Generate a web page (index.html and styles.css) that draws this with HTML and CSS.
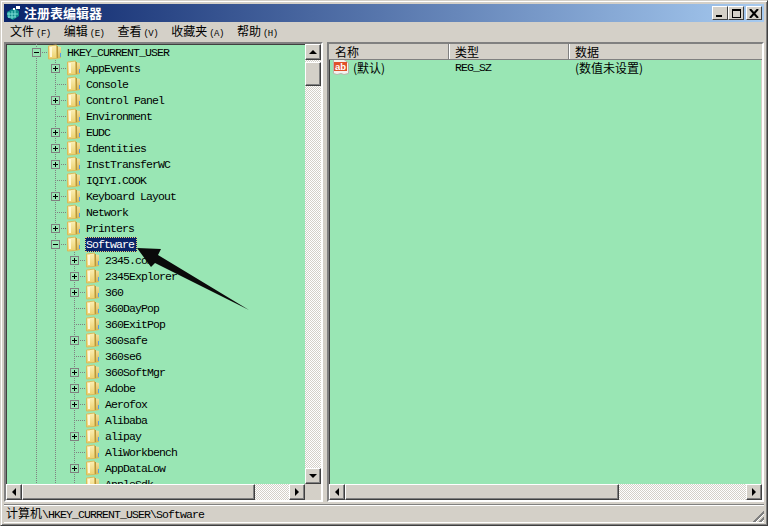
FILE: index.html
```html
<!DOCTYPE html>
<html lang="zh-CN">
<head>
    <meta charset="UTF-8">
    <title>注册表编辑器</title>
    <link rel="stylesheet" href="styles.css">
</head>
<body>
    <svg class="defs" width="0" height="0">
        <defs>
            <linearGradient id="leaf" x1="0" y1="0" x2="0" y2="1">
                <stop offset="0" stop-color="#fbf0b8"/>
                <stop offset="1" stop-color="#edd06c"/>
            </linearGradient>
            <linearGradient id="back" x1="0" y1="0" x2="0" y2="1">
                <stop offset="0" stop-color="#f2e2a0"/>
                <stop offset="1" stop-color="#d9b54e"/>
            </linearGradient>
        </defs>
        <symbol id="folder" viewBox="0 0 14 16">
            <path d="M8 2 L13 3 L13 14 L8 15 Z" fill="url(#back)"/>
            <path d="M0.5 2 L8.5 1 L8.5 14.5 L0.5 15 Z" fill="url(#leaf)" stroke="#d8bb5c" stroke-width="1"/>
            <path d="M9.5 2 L9.5 14" stroke="#b8963c" stroke-width="1"/>
            <path d="M3 3 L3 13" stroke="#fff8d8" stroke-width="2"/>
            <path d="M12 9 L13 9 L13 13 L12 13 Z" fill="#5c9ee0"/>
        </symbol>
    </svg>

    <div class="window">
        <div class="titlebar">
            <svg class="app-icon" width="17" height="16" viewBox="0 0 17 16">
                <path d="M2 7 L9 3 L14 6 L14 11 L8 15 L2 12 Z" fill="#0f8a8a"/>
                <path d="M4 7 L4 13 M7 6 L7 14 M10 5 L10 12 M2 9 L13 9 M3 12 L11 12" stroke="#7fe0d8" stroke-width="1"/>
                <path d="M11 1 L15 1 L15 4 L11 4 Z" fill="#fff"/>
                <path d="M8 3 L10 3 L10 5 L8 5 Z" fill="#fff"/>
            </svg>
            <span class="title-text">注册表编辑器</span>
            <div class="title-btns">
                <button class="cap-btn"><span class="cap-min"></span></button>
                <button class="cap-btn"><span class="cap-max"></span></button>
                <button class="cap-btn cap-close">
                    <svg width="10" height="9" viewBox="0 0 10 9"><path d="M1 0 L9 9 M9 0 L1 9" stroke="#000" stroke-width="2"/></svg>
                </button>
            </div>
        </div>

        <div class="menubar">
            <span class="menu-item">文件<i>(F)</i></span>
            <span class="menu-item">编辑<i>(E)</i></span>
            <span class="menu-item">查看<i>(V)</i></span>
            <span class="menu-item">收藏夹<i>(A)</i></span>
            <span class="menu-item">帮助<i>(H)</i></span>
        </div>

        <div class="split">
            <div class="pane pane-tree">
                <div class="pane-top">
                    <div class="tree">
                        <div class="row"><span class="ind"></span><span class="stub"><span class="box minus"></span></span><svg class="fld"><use href="#folder"/></svg><span class="lbl">HKEY_CURRENT_USER</span></div>
                        <div class="row"><span class="ind"></span><span class="ind"></span><span class="stub"><span class="box plus"></span></span><svg class="fld"><use href="#folder"/></svg><span class="lbl">AppEvents</span></div>
                        <div class="row"><span class="ind"></span><span class="ind"></span><span class="stub"></span><svg class="fld"><use href="#folder"/></svg><span class="lbl">Console</span></div>
                        <div class="row"><span class="ind"></span><span class="ind"></span><span class="stub"><span class="box plus"></span></span><svg class="fld"><use href="#folder"/></svg><span class="lbl">Control Panel</span></div>
                        <div class="row"><span class="ind"></span><span class="ind"></span><span class="stub"></span><svg class="fld"><use href="#folder"/></svg><span class="lbl">Environment</span></div>
                        <div class="row"><span class="ind"></span><span class="ind"></span><span class="stub"><span class="box plus"></span></span><svg class="fld"><use href="#folder"/></svg><span class="lbl">EUDC</span></div>
                        <div class="row"><span class="ind"></span><span class="ind"></span><span class="stub"><span class="box plus"></span></span><svg class="fld"><use href="#folder"/></svg><span class="lbl">Identities</span></div>
                        <div class="row"><span class="ind"></span><span class="ind"></span><span class="stub"><span class="box plus"></span></span><svg class="fld"><use href="#folder"/></svg><span class="lbl">InstTransferWC</span></div>
                        <div class="row"><span class="ind"></span><span class="ind"></span><span class="stub"></span><svg class="fld"><use href="#folder"/></svg><span class="lbl">IQIYI.COOK</span></div>
                        <div class="row"><span class="ind"></span><span class="ind"></span><span class="stub"><span class="box plus"></span></span><svg class="fld"><use href="#folder"/></svg><span class="lbl">Keyboard Layout</span></div>
                        <div class="row"><span class="ind"></span><span class="ind"></span><span class="stub"></span><svg class="fld"><use href="#folder"/></svg><span class="lbl">Network</span></div>
                        <div class="row"><span class="ind"></span><span class="ind"></span><span class="stub"><span class="box plus"></span></span><svg class="fld"><use href="#folder"/></svg><span class="lbl">Printers</span></div>
                        <div class="row"><span class="ind"></span><span class="ind"></span><span class="stub"><span class="box minus"></span></span><svg class="fld"><use href="#folder"/></svg><span class="lbl selected">Software</span></div>
                        <div class="row"><span class="ind"></span><span class="ind"></span><span class="ind"></span><span class="stub"><span class="box plus"></span></span><svg class="fld"><use href="#folder"/></svg><span class="lbl">2345.com</span></div>
                        <div class="row"><span class="ind"></span><span class="ind"></span><span class="ind"></span><span class="stub"><span class="box plus"></span></span><svg class="fld"><use href="#folder"/></svg><span class="lbl">2345Explorer</span></div>
                        <div class="row"><span class="ind"></span><span class="ind"></span><span class="ind"></span><span class="stub"><span class="box plus"></span></span><svg class="fld"><use href="#folder"/></svg><span class="lbl">360</span></div>
                        <div class="row"><span class="ind"></span><span class="ind"></span><span class="ind"></span><span class="stub"></span><svg class="fld"><use href="#folder"/></svg><span class="lbl">360DayPop</span></div>
                        <div class="row"><span class="ind"></span><span class="ind"></span><span class="ind"></span><span class="stub"></span><svg class="fld"><use href="#folder"/></svg><span class="lbl">360ExitPop</span></div>
                        <div class="row"><span class="ind"></span><span class="ind"></span><span class="ind"></span><span class="stub"><span class="box plus"></span></span><svg class="fld"><use href="#folder"/></svg><span class="lbl">360safe</span></div>
                        <div class="row"><span class="ind"></span><span class="ind"></span><span class="ind"></span><span class="stub"></span><svg class="fld"><use href="#folder"/></svg><span class="lbl">360se6</span></div>
                        <div class="row"><span class="ind"></span><span class="ind"></span><span class="ind"></span><span class="stub"><span class="box plus"></span></span><svg class="fld"><use href="#folder"/></svg><span class="lbl">360SoftMgr</span></div>
                        <div class="row"><span class="ind"></span><span class="ind"></span><span class="ind"></span><span class="stub"><span class="box plus"></span></span><svg class="fld"><use href="#folder"/></svg><span class="lbl">Adobe</span></div>
                        <div class="row"><span class="ind"></span><span class="ind"></span><span class="ind"></span><span class="stub"><span class="box plus"></span></span><svg class="fld"><use href="#folder"/></svg><span class="lbl">Aerofox</span></div>
                        <div class="row"><span class="ind"></span><span class="ind"></span><span class="ind"></span><span class="stub"></span><svg class="fld"><use href="#folder"/></svg><span class="lbl">Alibaba</span></div>
                        <div class="row"><span class="ind"></span><span class="ind"></span><span class="ind"></span><span class="stub"><span class="box plus"></span></span><svg class="fld"><use href="#folder"/></svg><span class="lbl">alipay</span></div>
                        <div class="row"><span class="ind"></span><span class="ind"></span><span class="ind"></span><span class="stub"></span><svg class="fld"><use href="#folder"/></svg><span class="lbl">AliWorkbench</span></div>
                        <div class="row"><span class="ind"></span><span class="ind"></span><span class="ind"></span><span class="stub"><span class="box plus"></span></span><svg class="fld"><use href="#folder"/></svg><span class="lbl">AppDataLow</span></div>
                        <div class="row"><span class="ind"></span><span class="ind"></span><span class="ind"></span><span class="stub"></span><svg class="fld"><use href="#folder"/></svg><span class="lbl">AppleSdk</span></div>
                    </div>
                    <div class="vscroll">
                        <button class="sb-btn"><span class="arr arr-up"></span></button>
                        <div class="sb-track sb-gap"></div>
                        <div class="sb-thumb-v"></div>
                        <div class="sb-track"></div>
                        <button class="sb-btn"><span class="arr arr-down"></span></button>
                    </div>
                </div>
                <div class="hscroll">
                    <button class="sb-btn"><span class="arr arr-left"></span></button>
                    <div class="sb-thumb-h thumb-tree"></div>
                    <div class="sb-track"></div>
                    <button class="sb-btn"><span class="arr arr-right"></span></button>
                    <div class="sb-corner"></div>
                </div>
            </div>

            <div class="pane pane-list">
                <div class="list-head">
                    <span class="col col-name">名称</span>
                    <span class="col col-type">类型</span>
                    <span class="col col-data">数据</span>
                </div>
                <div class="list-body">
                    <div class="list-row">
                        <span class="col-name cell-name">
                            <svg class="ab-icon" width="16" height="16" viewBox="0 0 16 16">
                                <path d="M0.5 0.5 L11 0.5 L15.5 4 L15.5 14.5 L11 15.5 L8 14.5 L4 15.5 L0.5 14.5 Z" fill="#f4f2ee" stroke="#b9b5ac" stroke-width="1"/>
                                <rect x="1" y="3" width="13" height="9" fill="#e0512a"/>
                                <text x="2" y="10.5" class="ab-text">ab</text>
                            </svg>
                            <span class="zh">(默认)</span>
                        </span>
                        <span class="col-type cell">REG_SZ</span>
                        <span class="col-data cell zh">(数值未设置)</span>
                    </div>
                </div>
                <div class="hscroll">
                    <button class="sb-btn"><span class="arr arr-left"></span></button>
                    <div class="sb-thumb-h thumb-list"></div>
                    <div class="sb-track"></div>
                    <button class="sb-btn"><span class="arr arr-right"></span></button>
                </div>
            </div>
        </div>

        <div class="statusbar">
            <span class="status-text"><span class="zh">计算机</span>\HKEY_CURRENT_USER\Software</span>
            <span class="grip"></span>
        </div>

        <svg class="pointer" width="130" height="80" viewBox="0 0 130 80">
            <polygon points="3,3 27,4 24,10 115,65 21,18 17,22" fill="#0a0a0a"/>
        </svg>
    </div>
</body>
</html>
```

FILE: styles.css
```css
* {
    box-sizing: border-box;
}
body {
    margin: 0;
    width: 768px;
    height: 526px;
    overflow: hidden;
    background: #d4d0c8;
    font-family: "Liberation Mono", monospace;
    font-size: 11.5px;
    color: #000;
}
.defs {
    position: absolute;
}
.zh {
    font-family: "Noto Sans CJK SC", sans-serif;
    font-size: 12px;
    letter-spacing: 0;
}
.window {
    position: relative;
    width: 768px;
    height: 526px;
    padding: 3px;
    background: #d4d0c8;
    border: 1px solid;
    border-color: #d4d0c8 #404040 #404040 #d4d0c8;
    box-shadow: inset 1px 1px 0 #fff, inset -1px -1px 0 #808080;
    display: flex;
    flex-direction: column;
}
.titlebar {
    height: 18px;
    background: linear-gradient(90deg, #0a246a, #a6caf0);
    display: flex;
    align-items: center;
    padding: 0 2px 0 1px;
    flex: none;
}
.app-icon {
    flex: none;
    margin-right: 2px;
}
.title-text {
    font-family: "Noto Sans CJK SC", sans-serif;
    font-size: 13px;
    font-weight: 700;
    color: #fff;
    line-height: 18px;
}
.title-btns {
    margin-left: auto;
    display: flex;
}
.cap-btn {
    width: 16px;
    height: 14px;
    padding: 0;
    background: #d4d0c8;
    border: 1px solid;
    border-color: #fff #404040 #404040 #fff;
    display: flex;
    align-items: center;
    justify-content: center;
}
.cap-close {
    margin-left: 2px;
}
.cap-min {
    width: 6px;
    height: 2px;
    background: #000;
    margin-top: 6px;
    margin-right: 2px;
}
.cap-max {
    width: 9px;
    height: 9px;
    border: 1px solid #000;
    border-top-width: 2px;
}
.menubar {
    height: 20px;
    flex: none;
    display: flex;
    align-items: center;
    padding-left: 6px;
    gap: 13px;
}
.menu-item {
    font-family: "Noto Sans CJK SC", sans-serif;
    font-size: 12px;
    line-height: 20px;
    white-space: nowrap;
}
.menu-item i {
    font-style: normal;
    font-family: "Liberation Mono", monospace;
    font-size: 9px;
    letter-spacing: -0.5px;
    margin-left: 2px;
}
.split {
    flex: 1;
    display: flex;
    gap: 4px;
    min-height: 0;
}
.pane {
    border: 2px solid;
    border-color: #808080 #fff #fff #808080;
    box-shadow: inset 1px 1px 0 #404040, inset -1px -1px 0 #d4d0c8;
    display: flex;
    flex-direction: column;
    min-height: 0;
    height: 460px;
    background: #99e6b4;
}
.pane-tree {
    width: 319px;
    flex: none;
}
.pane-list {
    flex: 1;
}
.pane-top {
    flex: 1;
    display: flex;
    min-height: 0;
}
.tree {
    flex: 1;
    overflow: hidden;
    padding-left: 8px;
    min-width: 0;
}
.row {
    height: 16px;
    display: flex;
    align-items: center;
    white-space: nowrap;
}
.ind {
    width: 19px;
    height: 16px;
    flex: none;
    background: repeating-linear-gradient(180deg, #808080 0 1px, transparent 1px 2px) 3px 0 / 1px 16px no-repeat;
}
.ind:first-child {
    background: none;
}
.stub {
    width: 15px;
    height: 16px;
    flex: none;
    display: flex;
    align-items: center;
    background:
        repeating-linear-gradient(180deg, #808080 0 1px, transparent 1px 2px) 3px 0 / 1px 16px no-repeat,
        repeating-linear-gradient(90deg, #808080 0 1px, transparent 1px 2px) 3px 8px / 12px 1px no-repeat;
}
.box {
    width: 9px;
    height: 9px;
    flex: none;
    margin-left: -1px;
    border: 1px solid #808080;
    background: #99e6b4;
    position: relative;
}
.box::before {
    content: "";
    position: absolute;
    left: 1px;
    top: 3px;
    width: 5px;
    height: 1px;
    background: #000;
}
.plus::after {
    content: "";
    position: absolute;
    left: 3px;
    top: 1px;
    width: 1px;
    height: 5px;
    background: #000;
}
.fld {
    width: 14px;
    height: 16px;
    flex: none;
    margin-right: 4px;
}
.lbl {
    line-height: 15px;
    padding: 0 3px 0 1px;
    letter-spacing: -0.9px;
}
.selected {
    background: #0a246a;
    color: #fff;
    outline: 1px dotted #e8d070;
    outline-offset: -1px;
}
.vscroll {
    width: 16px;
    flex: none;
    display: flex;
    flex-direction: column;
}
.hscroll {
    height: 16px;
    flex: none;
    display: flex;
}
.sb-btn {
    width: 16px;
    height: 16px;
    flex: none;
    padding: 0;
    background: #d4d0c8;
    border: 1px solid;
    border-color: #fff #404040 #404040 #fff;
    box-shadow: inset -1px -1px 0 #808080;
    display: flex;
    align-items: center;
    justify-content: center;
}
.sb-track {
    flex: 1;
    background: repeating-conic-gradient(#d4d0c8 0 25%, #fff 0 50%) 0 0 / 2px 2px;
}
.sb-gap {
    flex: none;
    height: 2px;
}
.sb-thumb-v {
    height: 24px;
    flex: none;
    background: #d4d0c8;
    border: 1px solid;
    border-color: #fff #404040 #404040 #fff;
    box-shadow: inset -1px -1px 0 #808080;
}
.sb-thumb-h {
    flex: none;
    background: #d4d0c8;
    border: 1px solid;
    border-color: #fff #404040 #404040 #fff;
    box-shadow: inset -1px -1px 0 #808080;
}
.thumb-tree {
    width: 233px;
}
.thumb-list {
    width: 274px;
}
.sb-corner {
    width: 16px;
    flex: none;
    background: #d4d0c8;
}
.arr {
    width: 0;
    height: 0;
    border: 4px solid transparent;
}
.arr-up {
    border-bottom-color: #000;
    border-top-width: 0;
}
.arr-down {
    border-top-color: #000;
    border-bottom-width: 0;
}
.arr-left {
    border-right-color: #000;
    border-left-width: 0;
}
.arr-right {
    border-left-color: #000;
    border-right-width: 0;
}
.list-head {
    height: 16px;
    flex: none;
    display: flex;
    background: #d4d0c8;
    border-bottom: 1px solid #808080;
}
.col {
    font-family: "Noto Sans CJK SC", sans-serif;
    font-size: 12px;
    line-height: 15px;
    padding-left: 6px;
    border-right: 1px solid #808080;
    box-shadow: 1px 0 0 #fff;
    flex: none;
}
.col-name {
    width: 120px;
}
.col-type {
    width: 120px;
}
.col-data {
    flex: 1;
    border-right: 0;
    box-shadow: none;
}
.list-body {
    flex: 1;
    min-height: 0;
    overflow: hidden;
}
.list-row {
    display: flex;
    height: 16px;
    padding-bottom: 2px;
    align-items: center;
    letter-spacing: -0.9px;
}
.cell {
    padding-left: 6px;
    flex: none;
}
.cell-name {
    display: flex;
    align-items: center;
    gap: 4px;
    height: 16px;
    padding-left: 4px;
    flex: none;
}
.ab-icon {
    flex: none;
}
.ab-text {
    font-family: "Liberation Sans", sans-serif;
    font-size: 9.5px;
    font-weight: 700;
    letter-spacing: 0;
    fill: #fff;
}
.statusbar {
    height: 18px;
    flex: none;
    margin-top: 2px;
    border-top: 1px solid #808080;
    box-shadow: inset 0 1px 0 #fff, 0 1px 0 #fff;
    display: flex;
    align-items: center;
    padding: 0 0 3px 2px;
    letter-spacing: -0.9px;
    position: relative;
}
.grip {
    position: absolute;
    right: 0;
    bottom: 0;
    width: 12px;
    height: 12px;
    background: repeating-linear-gradient(135deg, transparent 0 1px, #808080 1px 3px, #fff 3px 4px);
    clip-path: polygon(100% 0, 100% 100%, 0 100%);
}
.pointer {
    position: absolute;
    left: 133px;
    top: 244px;
}
```
